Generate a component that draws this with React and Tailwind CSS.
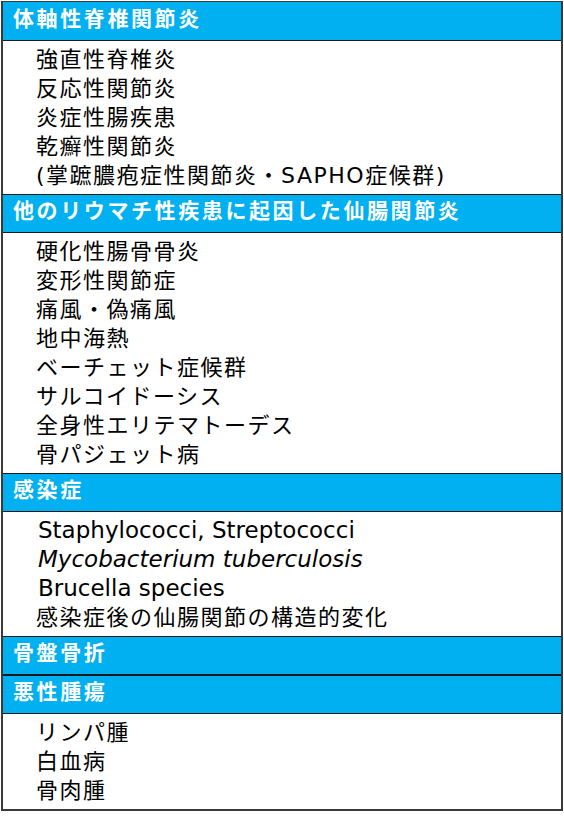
import React from "react";

const sections = [
  {
    title: "体軸性脊椎関節炎",
    items: ["強直性脊椎炎", "反応性関節炎", "炎症性腸疾患", "乾癬性関節炎", "(掌蹠膿疱症性関節炎・SAPHO症候群)"],
  },
  {
    title: "他のリウマチ性疾患に起因した仙腸関節炎",
    items: [
      "硬化性腸骨骨炎",
      "変形性関節症",
      "痛風・偽痛風",
      "地中海熱",
      "ベーチェット症候群",
      "サルコイドーシス",
      "全身性エリテマトーデス",
      "骨パジェット病",
    ],
  },
  {
    title: "感染症",
    items: [
      { text: "Staphylococci, Streptococci", latin: true },
      { text: "Mycobacterium tuberculosis", latin: true, italic: true },
      { text: "Brucella species", latin: true },
      "感染症後の仙腸関節の構造的変化",
    ],
  },
  { title: "骨盤骨折", items: [] },
  { title: "悪性腫瘍", items: ["リンパ腫", "白血病", "骨肉腫"] },
];

const font = { fontFamily: '"DejaVu Sans", "Noto Sans CJK JP", sans-serif' };

export default function App() {
  return (
    <div className="min-h-screen bg-white pt-[1px] pl-[1px]" style={font}>
      <div className="w-[562px] border-2 border-[#3a3a3a] border-t-[1.5px]">
        {sections.map((s, i) => (
          <div key={s.title}>
            <div
              className={
                "h-[39px] bg-[#00B0F0] pl-[10px] pb-[3px] flex items-center text-white font-bold text-[21px] tracking-[2.6px] border-b border-[#1a1a1a]" +
                (i > 0 ? " border-t border-[#1a1a1a]" : "")
              }
            >
              {s.title}
            </div>
            {s.items.length > 0 && (
              <div className="pt-[4px] pb-[4px] pl-[33px] text-[22px] leading-[29px] text-black">
                {s.items.map((it) => {
                  const t = typeof it === "string" ? it : it.text;
                  const latin = typeof it !== "string" && it.latin;
                  const italic = typeof it !== "string" && it.italic;
                  return (
                    <div
                      key={t}
                      className={latin ? "text-[23px] pl-[2px]" + (italic ? " italic" : "") : "tracking-[1.5px]"}
                    >
                      {t}
                    </div>
                  );
                })}
              </div>
            )}
          </div>
        ))}
      </div>
    </div>
  );
}
